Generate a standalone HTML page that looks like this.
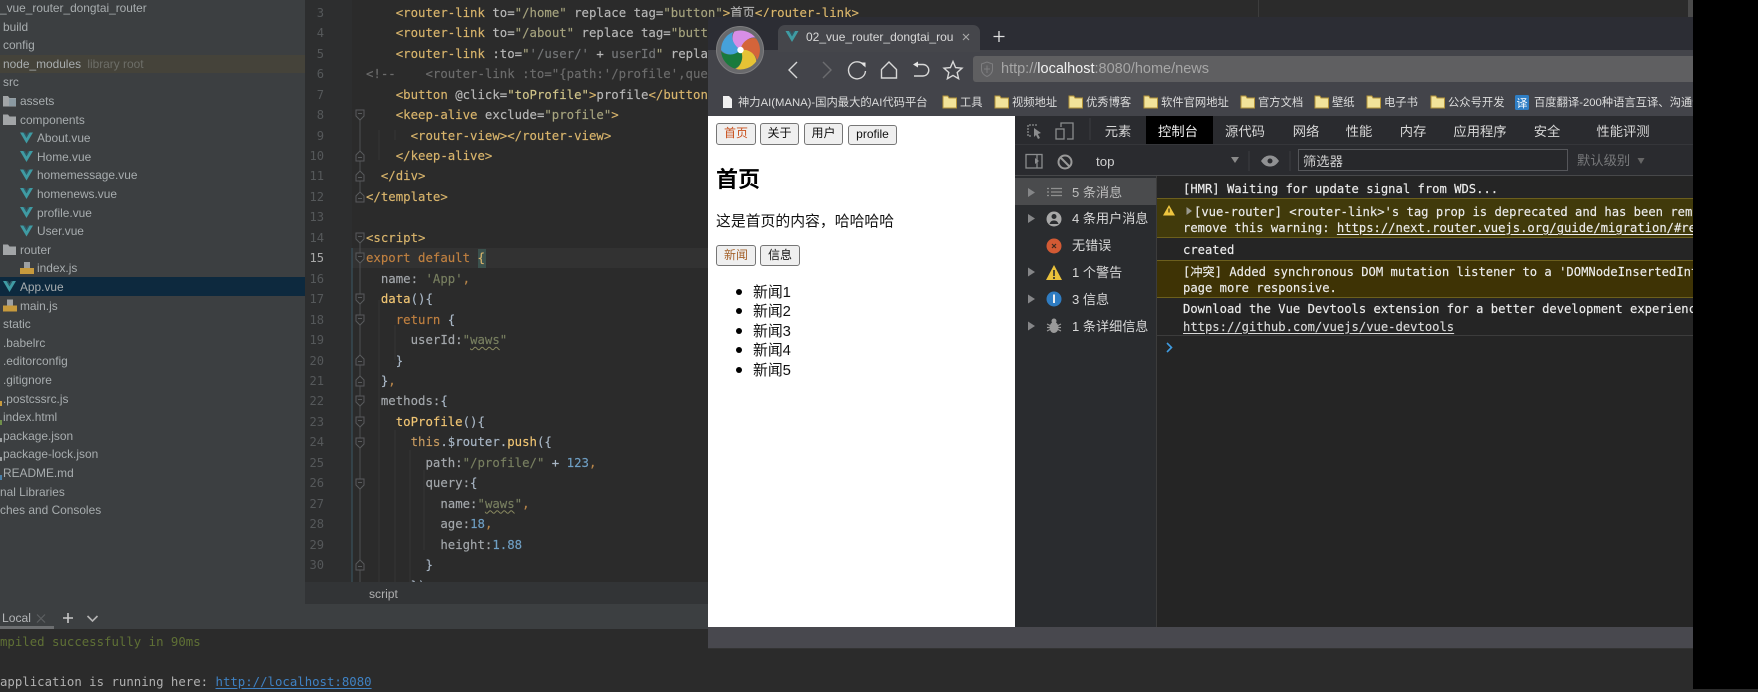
<!DOCTYPE html>
<html lang="zh"><head><meta charset="utf-8"><title>IDE and browser</title>
<style>
html,body{margin:0;padding:0;width:1758px;height:689px;overflow:hidden;background:#2b2b2b}
div,span,a{box-sizing:border-box}
.a{position:absolute}
.t{position:absolute;white-space:nowrap;line-height:20px}
#side .t{font:11.9px/20px "Liberation Sans",sans-serif;color:#a8adaf}
#code .t{font:12.35px/20px "DejaVu Sans Mono","Noto Sans CJK SC",monospace;color:#a9b7c6;left:366px;white-space:pre;-webkit-text-stroke:.15px}
#nums .t{font:12.1px/20px "DejaVu Sans Mono",monospace;color:#55585a;right:0;text-align:right;width:24px;left:300px}
.g{color:#d9b56c}.v{color:#b8b8b8}.s{color:#a6a37e}.d{color:#747678}.k{color:#c08040}.m{color:#f0c573}.n{color:#6f9fc4}.w{color:#787f60}.o{color:#b9864a}
.q{text-decoration:underline wavy #8a8a60 1px;text-underline-offset:2px}
#bm .t{font:11.3px/20px "Liberation Sans","Noto Sans CJK SC",sans-serif;color:#dcdcdc;top:93px}
.dt{position:absolute;top:122px;font:13.3px/20px "Liberation Sans","Noto Sans CJK SC",sans-serif;color:#d6d6d6;transform:translateX(-50%);white-space:nowrap}
.si{position:absolute;left:1072px;font:13.1px/20px "Liberation Sans","Noto Sans CJK SC",sans-serif;color:#d8d8d8;white-space:nowrap}
.c{position:absolute;left:1183px;font:12.18px/16px "DejaVu Sans Mono","Noto Sans CJK SC",monospace;color:#ececec;white-space:nowrap;-webkit-text-stroke:.15px}
.c u{text-underline-offset:2px}
.b{position:absolute;background:#efefef;border:1.4px solid #767676;border-radius:3px;font:12px/19px "Liberation Sans","Noto Sans CJK SC",sans-serif;color:#111;text-align:center}
.p{position:absolute;left:753px;font:14.85px/20px "Liberation Sans","Noto Sans CJK SC",sans-serif;color:#111;white-space:nowrap}
.l{position:absolute;left:736px;width:6px;height:6px;border-radius:3px;background:#000}
</style></head><body>

<!-- editor -->
<div class="a" style="left:305px;top:0;width:1400px;height:582px;background:#2b2b2b"></div>
<div class="a" style="left:305px;top:0;width:47px;height:582px;background:#2d2e2f"></div>
<div class="a" style="left:352px;top:248px;width:356px;height:20px;background:#323232"></div>
<div class="a" style="left:478px;top:249px;width:8px;height:19px;background:#3b514d"></div>
<div class="a" style="left:1258px;top:0;width:1px;height:17px;background:#3d3d3d"></div>
<div class="a" style="left:1688px;top:0;width:5px;height:17px;background:#4a4a4a"></div>

<div id="nums" class="a" style="left:0;top:0;width:324px;height:582px">
<span class="t" style="top:2.7px">3</span><span class="t" style="top:23.2px">4</span><span class="t" style="top:43.6px">5</span><span class="t" style="top:64.1px">6</span><span class="t" style="top:84.5px">7</span><span class="t" style="top:105px">8</span><span class="t" style="top:125.5px">9</span><span class="t" style="top:145.9px">10</span><span class="t" style="top:166.4px">11</span><span class="t" style="top:186.8px">12</span><span class="t" style="top:207.3px">13</span><span class="t" style="top:227.8px">14</span><span class="t" style="top:248.2px;color:#a8a8a8">15</span><span class="t" style="top:268.7px">16</span><span class="t" style="top:289.1px">17</span><span class="t" style="top:309.6px">18</span><span class="t" style="top:330px">19</span><span class="t" style="top:350.5px">20</span><span class="t" style="top:371px">21</span><span class="t" style="top:391.4px">22</span><span class="t" style="top:411.9px">23</span><span class="t" style="top:432.3px">24</span><span class="t" style="top:452.8px">25</span><span class="t" style="top:473.2px">26</span><span class="t" style="top:493.7px">27</span><span class="t" style="top:514.2px">28</span><span class="t" style="top:534.6px">29</span><span class="t" style="top:555.1px">30</span>
</div>

<div id="code" class="a" style="left:0;top:0;width:1700px;height:582px;overflow:hidden">
<div class="t" style="top:2.7px">    <span class="g">&lt;router-link</span> <span class="v">to=</span><span class="s">"/home"</span> <span class="v">replace tag=</span><span class="s">"button"</span><span class="g">&gt;</span><span style="color:#b0b0b0">首页</span><span class="g">&lt;/router-link&gt;</span></div>
<div class="t" style="top:23.2px">    <span class="g">&lt;router-link</span> <span class="v">to=</span><span class="s">"/about"</span> <span class="v">replace tag=</span><span class="s">"button"</span><span class="g">&gt;</span></div>
<div class="t" style="top:43.6px">    <span class="g">&lt;router-link</span> <span class="v">:to=</span><span class="s">"</span><span class="d">'/user/'</span> <span class="v">+ </span><span class="d">userId</span><span class="s">"</span> <span class="v">replace</span></div>
<div class="t d" style="top:64.1px;color:#6c6c6c">&lt;!--    &lt;router-link :to="{path:'/profile',query:{}}"&gt;</div>
<div class="t" style="top:84.5px">    <span class="g">&lt;button</span> <span class="v">@click=</span><span class="s" style="color:#d0c48a">"toProfile"</span><span class="g">&gt;</span><span class="v">profile</span><span class="g">&lt;/button&gt;</span></div>
<div class="t" style="top:105px">    <span class="g">&lt;keep-alive</span> <span class="v">exclude=</span><span class="s">"profile"</span><span class="g">&gt;</span></div>
<div class="t" style="top:125.5px">      <span class="g">&lt;router-view&gt;&lt;/router-view&gt;</span></div>
<div class="t" style="top:145.9px">    <span class="g">&lt;/keep-alive&gt;</span></div>
<div class="t" style="top:166.4px">  <span class="g">&lt;/div&gt;</span></div>
<div class="t" style="top:186.8px"><span class="g">&lt;/template&gt;</span></div>
<div class="t" style="top:227.8px"><span class="g">&lt;script&gt;</span></div>
<div class="t" style="top:248.2px"><span class="k">export default</span> <span class="g">{</span></div>
<div class="t" style="top:268.7px">  <span style="color:#a4a8ac">name:</span> <span class="w">'App'</span><span class="o">,</span></div>
<div class="t" style="top:289.1px">  <span class="m">data</span>(){</div>
<div class="t" style="top:309.6px">    <span class="k">return</span> {</div>
<div class="t" style="top:330px">      <span style="color:#a4a8ac">userId:</span><span class="w">"<span class="q">waws</span>"</span></div>
<div class="t" style="top:350.5px">    }</div>
<div class="t" style="top:371px">  }<span class="o">,</span></div>
<div class="t" style="top:391.4px">  <span style="color:#a4a8ac">methods:</span>{</div>
<div class="t" style="top:411.9px">    <span class="m">toProfile</span>(){</div>
<div class="t" style="top:432.3px">      <span class="k" style="color:#c69a60">this</span>.$router.<span class="m">push</span>({</div>
<div class="t" style="top:452.8px">        <span style="color:#a4a8ac">path:</span><span class="w">"/profile/"</span> + <span class="n">123</span><span class="o">,</span></div>
<div class="t" style="top:473.2px">        <span style="color:#a4a8ac">query:</span>{</div>
<div class="t" style="top:493.7px">          <span style="color:#a4a8ac">name:</span><span class="w">"<span class="q">waws</span>"</span><span class="o">,</span></div>
<div class="t" style="top:514.2px">          <span style="color:#a4a8ac">age:</span><span class="n">18</span><span class="o">,</span></div>
<div class="t" style="top:534.6px">          <span style="color:#a4a8ac">height:</span><span class="n">1.88</span></div>
<div class="t" style="top:555.1px">        }</div>
<div class="t" style="top:575.5px">      })</div>
</div>

<!-- script bar -->
<div class="a" style="left:305px;top:582px;width:404px;height:22px;background:#323436"></div>
<div class="t" style="left:369px;top:584px;font:12.1px/20px 'Liberation Sans',sans-serif;color:#b0b0b0">script</div>

<!-- project sidebar -->
<div id="side" class="a" style="left:0;top:0;width:305px;height:604px;background:#3c3f41;overflow:hidden">
<div class="a" style="left:0;top:55px;width:305px;height:18px;background:#45433a"></div>
<div class="a" style="left:0;top:277px;width:305px;height:19px;background:#0d293e"></div>
<span class="t" style="left:0;top:-2px">_vue_router_dongtai_router</span>
<span class="t" style="left:3px;top:16.6px">build</span>
<span class="t" style="left:3px;top:35.2px">config</span>
<span class="t" style="left:3px;top:53.8px">node_modules <span style="color:#6d6e68;margin-left:3px">library root</span></span>
<span class="t" style="left:3px;top:72.4px">src</span>
<span class="t" style="left:20px;top:91px">assets</span>
<span class="t" style="left:20px;top:109.6px">components</span>
<span class="t" style="left:37px;top:128.2px">About.vue</span>
<span class="t" style="left:37px;top:146.8px">Home.vue</span>
<span class="t" style="left:37px;top:165.4px">homemessage.vue</span>
<span class="t" style="left:37px;top:184px">homenews.vue</span>
<span class="t" style="left:37px;top:202.6px">profile.vue</span>
<span class="t" style="left:37px;top:221.2px">User.vue</span>
<span class="t" style="left:20px;top:239.8px">router</span>
<span class="t" style="left:37px;top:258.4px">index.js</span>
<span class="t" style="left:20px;top:277px">App.vue</span>
<span class="t" style="left:20px;top:295.6px">main.js</span>
<span class="t" style="left:3px;top:314.2px">static</span>
<span class="t" style="left:3px;top:332.8px">.babelrc</span>
<span class="t" style="left:3px;top:351.4px">.editorconfig</span>
<span class="t" style="left:3px;top:370px">.gitignore</span>
<span class="t" style="left:3px;top:388.6px">.postcssrc.js</span>
<span class="t" style="left:3px;top:407.2px">index.html</span>
<span class="t" style="left:3px;top:425.8px">package.json</span>
<span class="t" style="left:3px;top:444.4px">package-lock.json</span>
<span class="t" style="left:3px;top:463px">README.md</span>
<span class="t" style="left:0;top:481.6px">nal Libraries</span>
<span class="t" style="left:0;top:500.2px">ches and Consoles</span>
</div>

<!-- terminal -->
<div class="a" style="left:0;top:604px;width:709px;height:25px;background:#3c3f41"></div>
<div class="a" style="left:0;top:626px;width:54px;height:3px;background:#6c6e70"></div>
<div class="t" style="left:2px;top:608px;font:12.1px/20px 'Liberation Sans',sans-serif;color:#b4b6b8">Local</div>
<div class="a" style="left:0;top:629px;width:1700px;height:60px;background:#2b2b2b"></div>
<div class="t" style="left:0;top:632px;font:12.35px/20px 'DejaVu Sans Mono',monospace;color:#5f7035">mpiled successfully in 90ms</div>
<div class="t" style="left:0;top:671.500px;font:12.35px/20px 'DejaVu Sans Mono',monospace;color:#b0b0b0;white-space:pre">application is running here: <span style="color:#3f82c4;text-decoration:underline;text-underline-offset:2px">http://localhost:8080</span></div>

<!-- browser -->
<div class="a" style="left:708px;top:17px;width:985px;height:33px;background:#2c2d34"></div>
<div class="a" style="left:708px;top:50px;width:985px;height:66px;background:#43444a"></div>
<div class="a" style="left:778px;top:25px;width:202px;height:27px;background:#45464b;border-radius:7px 7px 0 0"></div>
<div class="t" style="left:806px;top:27px;width:147px;overflow:hidden;font:12px/20px 'Liberation Sans',sans-serif;color:#d8d8d8">02_vue_router_dongtai_router</div>
<div class="a" style="left:973px;top:56px;width:720px;height:26px;background:#5f5f61;border-radius:3px 0 0 3px"></div>
<div class="t" style="left:1001px;top:59px;font:14.5px/20px 'Liberation Sans',sans-serif;color:#a6a6a6">http://<span style="color:#f2f2f2">localhost</span>:8080/home/news</div>

<div id="bm">
<span class="t" style="left:738px">神力AI(MANA)-国内最大的AI代码平台</span>
<span class="t" style="left:960px">工具</span>
<span class="t" style="left:1012px">视频地址</span>
<span class="t" style="left:1086px">优秀博客</span>
<span class="t" style="left:1161px">软件官网地址</span>
<span class="t" style="left:1258px">官方文档</span>
<span class="t" style="left:1332px">壁纸</span>
<span class="t" style="left:1384px">电子书</span>
<span class="t" style="left:1448px">公众号开发</span>
<span class="t" style="left:1534px;width:159px;overflow:hidden">百度翻译-200种语言互译、沟通全世界</span>
</div>

<!-- page -->
<div class="a" style="left:708px;top:116px;width:307px;height:511px;background:#fff"></div>
<div class="b" style="left:716px;top:123px;width:40px;height:22px;color:#c9501c">首页</div>
<div class="b" style="left:760px;top:123px;width:39px;height:22px">关于</div>
<div class="b" style="left:804px;top:123px;width:39px;height:22px">用户</div>
<div class="b" style="left:848px;top:125px;width:49px;height:20px;line-height:17px">profile</div>
<div class="t" style="left:716px;top:168px;font:bold 22px/24px 'Liberation Sans','Noto Sans CJK SC',sans-serif;color:#000">首页</div>
<div class="p" style="left:716px;top:212px">这是首页的内容，哈哈哈哈</div>
<div class="b" style="left:716px;top:245px;width:40px;height:21px;line-height:18px;color:#a5632c">新闻</div>
<div class="b" style="left:760px;top:245px;width:40px;height:21px;line-height:18px">信息</div>
<span class="l" style="top:289px"></span><span class="p" style="top:282.500px">新闻1</span>
<span class="l" style="top:308px"></span><span class="p" style="top:302px">新闻2</span>
<span class="l" style="top:328px"></span><span class="p" style="top:321.500px">新闻3</span>
<span class="l" style="top:347px"></span><span class="p" style="top:341px">新闻4</span>
<span class="l" style="top:367px"></span><span class="p" style="top:360.500px">新闻5</span>

<!-- devtools -->
<div class="a" style="left:1015px;top:116px;width:678px;height:59px;background:#2a2b2f"></div>
<div class="a" style="left:1015px;top:144px;width:678px;height:1px;background:#35363a"></div>
<div class="a" style="left:1015px;top:175px;width:678px;height:1.5px;background:#47484a"></div>
<div class="a" style="left:1146px;top:116px;width:67px;height:28px;background:#000"></div>
<span class="dt" style="left:1118px">元素</span><span class="dt" style="left:1178px;color:#eee">控制台</span><span class="dt" style="left:1245px">源代码</span><span class="dt" style="left:1306px">网络</span><span class="dt" style="left:1359px">性能</span><span class="dt" style="left:1413px">内存</span><span class="dt" style="left:1480px">应用程序</span><span class="dt" style="left:1547px">安全</span><span class="dt" style="left:1623px">性能评测</span>
<div class="t" style="left:1096px;top:152px;font:13.3px/20px 'Liberation Sans',sans-serif;color:#d0d0d0">top</div>
<div class="a" style="left:1298px;top:149px;width:270px;height:22px;background:#27282b;border:1px solid #55565a"></div>
<div class="t" style="left:1303px;top:152px;font:13.3px/20px 'Liberation Sans','Noto Sans CJK SC',sans-serif;color:#cfcfcf">筛选器</div>
<div class="t" style="left:1577px;top:151px;font:13.3px/20px 'Liberation Sans','Noto Sans CJK SC',sans-serif;color:#77787a">默认级别</div>

<div class="a" style="left:1015px;top:176px;width:141px;height:451px;background:#2a2c2f"></div>
<div class="a" style="left:1015px;top:178px;width:141px;height:27px;background:#4a4b4d"></div>
<div class="a" style="left:1156px;top:176px;width:537px;height:451px;background:#252525;border-left:1px solid #3c3c3c"></div>
<div class="si" style="top:183px;color:#bdbdbd">5 条消息</div><div class="si" style="top:209px">4 条用户消息</div><div class="si" style="top:236px">无错误</div><div class="si" style="top:263px">1 个警告</div><div class="si" style="top:289.500px">3 信息</div><div class="si" style="top:317px">1 条详细信息</div>

<div class="a" style="left:1157px;top:198px;width:536px;height:40px;background:#413a0b;border-top:1px solid #6c5f1d;border-bottom:1px solid #6c5f1d"></div>
<div class="a" style="left:1157px;top:260px;width:536px;height:38px;background:#3e3305;border-top:1px solid #6c5f1d;border-bottom:1px solid #6c5f1d"></div>
<div class="a" style="left:1157px;top:335px;width:536px;height:1px;background:#3c3c3c"></div>
<div class="a" style="left:0;top:0;width:1693px;height:627px;overflow:hidden">
<div class="c" style="top:181px">[HMR] Waiting for update signal from WDS...</div>
<div class="c" style="left:1194px;top:204px">[vue-router] &lt;router-link&gt;'s tag prop is deprecated and has been removed</div>
<div class="c" style="top:220px">remove this warning: <u>https://next.router.vuejs.org/guide/migration/#removal</u></div>
<div class="c" style="top:242px">created</div>
<div class="c" style="top:264px">[冲突] Added synchronous DOM mutation listener to a 'DOMNodeInsertedIntoDocument'</div>
<div class="c" style="top:280px">page more responsive.</div>
<div class="c" style="top:301px">Download the Vue Devtools extension for a better development experience:</div>
<div class="c" style="top:318.500px;color:#d8d8d8"><u>https://github.com/vuejs/vue-devtools</u></div>
</div>

<div class="a" style="left:708px;top:627px;width:985px;height:22px;background:#48484e;border-bottom:1px solid #333"></div>

<!-- icons overlay -->
<svg class="a" style="left:0;top:0" width="1758" height="689" viewBox="0 0 1758 689" fill="none">
<defs>
<g id="vue"><path d="M0 0H3.4L6.5 5.4 9.6 0H13L6.5 11Z" fill="#3f9ba3"/><path d="M3.4 0H5L6.5 2.6 8 0H9.6L6.5 5.4Z" fill="#2f5a66"/></g>
<path id="fo" d="M0 0H5L6.5 2H13V10.5H0Z" fill="#a2a5a7"/>
<g id="js"><path d="M4 0H10V6H4Z" fill="#9da0a2"/><rect x="0" y="6" width="14" height="6" fill="#c79a3d"/></g>
<g id="fdn"><path d="M-4 -5H4V1L0 5-4 1Z" fill="#2b2b2b" stroke="#585a5c"/><path d="M-2 -1.5H2" stroke="#585a5c"/></g>
<g id="fup"><path d="M-4 5H4V-1L0 -5-4 -1Z" fill="#2b2b2b" stroke="#585a5c"/><path d="M-2 1.5H2" stroke="#585a5c"/></g>
<g id="bf"><path d="M0 .5H4.8L6 2.5H13.5V12.5H0Z" fill="#f2e39a" stroke="#b3933a" stroke-width="1"/></g>
<path id="petal" d="M0 0C-8 -4 -10 -13 -6 -18.5A19.5 19.5 0 0 1 15 -12.4C9 -13.5 3 -9 0 0Z"/>
</defs>

<!-- sidebar icons -->
<use href="#fo" x="3" y="96"/><path d="M9 98.5H16V106H9Z" fill="#8b9aa2"/>
<use href="#fo" x="3" y="114.5"/><use href="#fo" x="3" y="244.5"/>
<use href="#vue" x="20" y="132.5"/><use href="#vue" x="20" y="151"/><use href="#vue" x="20" y="169.5"/><use href="#vue" x="20" y="188"/><use href="#vue" x="20" y="207"/><use href="#vue" x="20" y="225.5"/><use href="#vue" x="3" y="281"/>
<use href="#js" x="20" y="262"/><use href="#js" x="3" y="299.5"/>
<rect x="0" y="401" width="2" height="5" fill="#c79a3d"/><rect x="0" y="420" width="2" height="5" fill="#6f8f4a"/><rect x="0" y="438" width="2" height="4" fill="#9da0a2"/><rect x="0" y="457" width="2" height="4" fill="#9da0a2"/><rect x="0" y="475" width="2" height="5" fill="#4a7fa8"/>

<!-- gutter -->
<path d="M352 248V582" stroke="#3b5866"/>
<path d="M360 112V200M360 233V582" stroke="#4d4f51"/>
<path d="M379 130V160M395 130V140M379 300V582M395 325V360M395 430V582M410 450V582M424 470V550" stroke="#363636"/>
<use href="#fdn" x="360" y="115"/><use href="#fup" x="360" y="156"/><use href="#fup" x="360" y="176"/><use href="#fup" x="360" y="197"/><use href="#fdn" x="360" y="238"/><use href="#fdn" x="360" y="258"/><use href="#fdn" x="360" y="299"/><use href="#fdn" x="360" y="320"/><use href="#fup" x="360" y="360"/><use href="#fup" x="360" y="381"/><use href="#fdn" x="360" y="401"/><use href="#fdn" x="360" y="422"/><use href="#fdn" x="360" y="443"/><use href="#fdn" x="360" y="484"/><use href="#fup" x="360" y="565"/>

<!-- terminal icons -->
<path d="M37 614.5 45 622.5M45 614.5 37 622.5" stroke="#5d5f61" stroke-width="1.2"/>
<path d="M68 613V623M63 618H73" stroke="#c8c8c8" stroke-width="1.6"/>
<path d="M87.5 616 92.5 621 97.5 616" stroke="#b4b4b4" stroke-width="1.6"/>

<!-- logo -->
<circle cx="740" cy="50" r="23.5" fill="#68696c"/><circle cx="740" cy="50" r="23.5" stroke="#7e7e80" stroke-width="1"/>
<g transform="translate(740.5 50)">
<use href="#petal" fill="#d78ee6"/><use href="#petal" fill="#d4643a" transform="rotate(72)"/><use href="#petal" fill="#e6c335" transform="rotate(144)"/><use href="#petal" fill="#197a3c" transform="rotate(216)"/><use href="#petal" fill="#46a1da" transform="rotate(288)"/>
<circle r="3.2" fill="#fff"/></g>

<!-- tab -->
<use href="#vue" x="785.5" y="31"/>
<path d="M963 34 969 40M969 34 963 40" stroke="#a8a8a8" stroke-width="1.1"/>
<path d="M999 31V42M993.5 36.5H1004.5" stroke="#e0e0e0" stroke-width="1.3"/>

<!-- nav -->
<g stroke="#d8d8d8" stroke-width="1.4" fill="none">
<path d="M797 62 789 70 797 78"/>
<path d="M823 62 831 70 823 78" stroke="#6c6c70"/>
<path d="M864 65.5A8.5 8.5 0 1 0 865.5 71"/>
<path d="M889 62 881.5 69.5V78H896.5V69.5Z"/>
<path d="M917 64.5H923A5.5 5.5 0 0 1 923 76H914"/>
<path d="M953 61.5 955.6 67.6 962 68.2 957.2 72.5 958.6 78.7 953 75.4 947.4 78.7 948.8 72.5 944 68.2 950.4 67.6Z"/>
</g>
<path d="M860.5 62.5 865.5 62.5 865.5 67.5Z" fill="#e4e4e4"/>
<path d="M913 64.5 918 61.5V67.5Z" fill="#e4e4e4"/>
<path d="M981.5 64 987 62 992.5 64V69.5C992.5 73 989.5 75.5 987 76.5 984.5 75.5 981.5 73 981.500 69.5ZM987 65.5V73M984 69H990" stroke="#7e7e80" stroke-width="1"/>

<!-- bookmarks -->
<path d="M723 96H729L732 99V108H723Z" fill="#f0f0f0"/>
<use href="#bf" x="943" y="95.5"/><use href="#bf" x="995" y="95.5"/><use href="#bf" x="1069" y="95.5"/><use href="#bf" x="1144" y="95.5"/><use href="#bf" x="1241" y="95.5"/><use href="#bf" x="1315" y="95.5"/><use href="#bf" x="1367" y="95.5"/><use href="#bf" x="1431" y="95.5"/>

<!-- devtools row 1 -->
<g stroke="#8b8c8e" stroke-width="1.3" fill="none">
<path d="M1037 125H1028V136H1031" stroke-dasharray="2 1"/>
<path d="M1061 127V123H1073V139H1067"/><rect x="1056" y="129" width="8" height="10"/>
<rect x="1026" y="154.5" width="16" height="13.5"/><path d="M1037 154.5V168"/>
<circle cx="1065" cy="162" r="6.5" stroke-width="2" stroke="#999"/><path d="M1060.5 157.5 1069.5 166.5" stroke-width="2" stroke="#999"/>
<path d="M1090 118V140M1249 151V171M1290 151V171" stroke="#3c3d40" stroke-width="1"/>
</g>
<path d="M1034 128 1041 133 1037.8 134 1040 138 1038 139 1036 135 1034 137Z" fill="#8b8c8e"/>
<path d="M1034 161 1030 158V164Z" fill="#8b8c8e" transform="translate(5 0)"/>
<path d="M1231 157H1239L1235 163Z" fill="#8a8a8a"/>
<path d="M1637.5 158H1644.5L1641 164Z" fill="#666"/>
<path d="M1261 161C1264 156.5 1267 155.5 1270 155.5S1276 156.5 1279 161C1276 165.5 1273 166.5 1270 166.5S1264 165.5 1261 161Z" fill="#909193"/><circle cx="1270" cy="161" r="2.5" fill="#2a2b2f"/>

<!-- devtools sidebar -->
<g fill="#858688">
<path d="M1028 188 1035 192.5 1028 197Z"/><path d="M1028 214 1035 218.5 1028 223Z"/><path d="M1028 267.5 1035 272 1028 276.5Z"/><path d="M1028 294.5 1035 299 1028 303.5Z"/><path d="M1028 321.500 1035 326 1028 330.5Z"/>
</g>
<path d="M1047 188.5H1049M1051 188.5H1062M1047 192H1049M1051 192H1062M1047 195.5H1049M1051 195.5H1062" stroke="#909090" stroke-width="1.3"/>
<circle cx="1054" cy="219" r="7.5" fill="#a8a8a8"/><circle cx="1054" cy="216.5" r="2.5" fill="#2a2c2f"/><path d="M1049.5 224C1050.5 221 1052 220.5 1054 220.5S1057.5 221 1058.5 224Z" fill="#2a2c2f"/>
<circle cx="1054" cy="246" r="7.5" fill="#d25a34"/><path d="M1052 244 1056 248M1056 244 1052 248" stroke="#3a2a20" stroke-width="1.2"/>
<path d="M1054 265 1062 280H1046Z" fill="#e9c13b"/><path d="M1054 270V276M1054 277V279" stroke="#2a2c2f" stroke-width="1.6"/>
<circle cx="1054" cy="299" r="7.5" fill="#2f7cc1"/><path d="M1054 294.5V303" stroke="#f0f0f0" stroke-width="2"/>
<ellipse cx="1054" cy="327.5" rx="4.5" ry="5.5" fill="#9a9a9a"/><circle cx="1054" cy="321" r="2.5" fill="#9a9a9a"/><path d="M1047 324 1061 331M1061 324 1047 331M1047 327.5H1061" stroke="#9a9a9a" stroke-width="1.2"/>
<path d="M1169 205 1175 215.5H1163Z" fill="#eec53f"/><path d="M1169 208.5V212.5" stroke="#3a3208" stroke-width="1.2"/>
<path d="M1186.5 207 1192 211 1186.5 215Z" fill="#9a9a90"/>
<path d="M1167 343 1171.5 347.5 1167 352" stroke="#3f9be0" stroke-width="1.6"/>

<!-- translate icon -->
<rect x="1515" y="95" width="14" height="15" rx="1.5" fill="#2f7fc6"/>
</svg>
<div class="t" style="left:1515px;top:93px;width:14px;text-align:center;font:11px/20px 'Noto Sans CJK SC',sans-serif;color:#fff">译</div>

<!-- black strip -->
<div class="a" style="left:1693px;top:0;width:65px;height:689px;background:#000"></div>
</body></html>
